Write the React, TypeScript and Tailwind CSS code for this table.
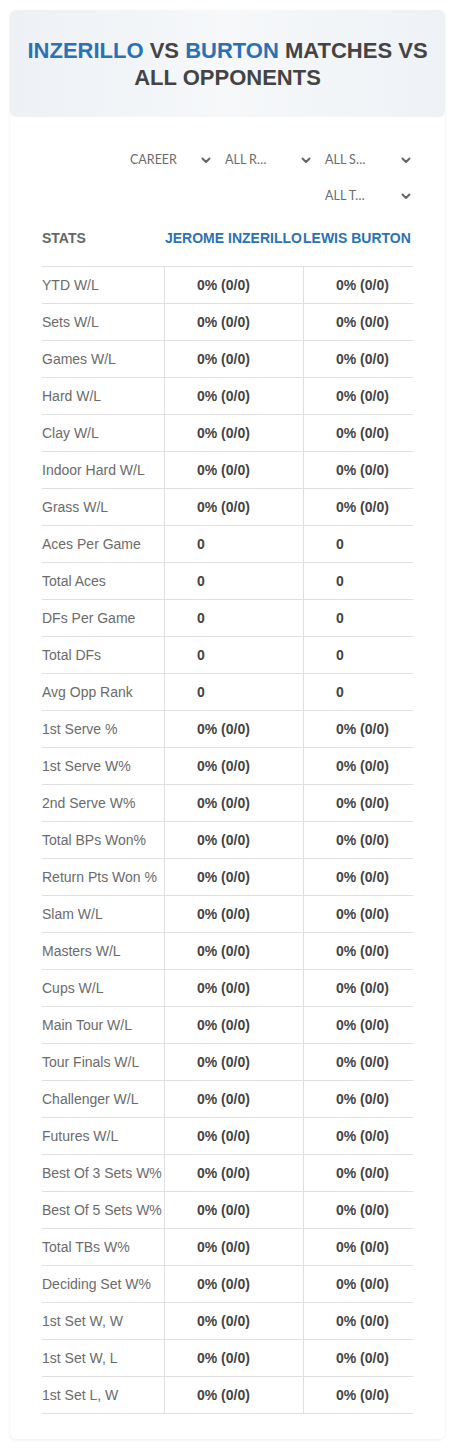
import React from "react";

const rows: [string, string][] = [
  ["YTD W/L", "0% (0/0)"],
  ["Sets W/L", "0% (0/0)"],
  ["Games W/L", "0% (0/0)"],
  ["Hard W/L", "0% (0/0)"],
  ["Clay W/L", "0% (0/0)"],
  ["Indoor Hard W/L", "0% (0/0)"],
  ["Grass W/L", "0% (0/0)"],
  ["Aces Per Game", "0"],
  ["Total Aces", "0"],
  ["DFs Per Game", "0"],
  ["Total DFs", "0"],
  ["Avg Opp Rank", "0"],
  ["1st Serve %", "0% (0/0)"],
  ["1st Serve W%", "0% (0/0)"],
  ["2nd Serve W%", "0% (0/0)"],
  ["Total BPs Won%", "0% (0/0)"],
  ["Return Pts Won %", "0% (0/0)"],
  ["Slam W/L", "0% (0/0)"],
  ["Masters W/L", "0% (0/0)"],
  ["Cups W/L", "0% (0/0)"],
  ["Main Tour W/L", "0% (0/0)"],
  ["Tour Finals W/L", "0% (0/0)"],
  ["Challenger W/L", "0% (0/0)"],
  ["Futures W/L", "0% (0/0)"],
  ["Best Of 3 Sets W%", "0% (0/0)"],
  ["Best Of 5 Sets W%", "0% (0/0)"],
  ["Total TBs W%", "0% (0/0)"],
  ["Deciding Set W%", "0% (0/0)"],
  ["1st Set W, W", "0% (0/0)"],
  ["1st Set W, L", "0% (0/0)"],
  ["1st Set L, W", "0% (0/0)"],
];

function Chevron() {
  return (
    <svg width="10" height="7" viewBox="0 0 10 7" className="shrink-0">
      <polyline points="1.5,1.5 5,5 8.5,1.5" fill="none" stroke="#666" strokeWidth="2" strokeLinecap="round" strokeLinejoin="round" />
    </svg>
  );
}

function Select({ label, pl }: { label: string; pl: string }) {
  return (
    <div className={`flex h-[36px] w-[100px] items-center justify-between pr-[2px] ${pl}`}>
      <span className="text-[12.5px] text-[#6b6b6b]" style={{ fontFamily: "Lato, 'Open Sans', sans-serif" }}>
        {label}
      </span>
      <Chevron />
    </div>
  );
}

export default function App() {
  return (
    <div className="min-h-[1448px] bg-white pt-[10px] px-[10px]" style={{ fontFamily: "'Liberation Sans', Arial, sans-serif" }}>
      <div className="w-[435px] rounded-[6px] bg-white shadow-[0_1px_3px_rgba(0,0,0,0.08)] pb-[25px]">
        <div className="flex h-[107px] items-center justify-center rounded-[6px] bg-gradient-to-r from-[#edf1f5] via-[#f6f8fa] to-[#eef2f6] px-[14px] text-center">
          <h1 className="text-[22px] font-bold leading-[27px] text-[#444444]">
            <span className="text-[#2a72b5]">INZERILLO</span> VS <span className="text-[#2a72b5]">BURTON</span> MATCHES VS ALL OPPONENTS
          </h1>
        </div>
        <div className="px-[32px] pt-[25px]">
          <div className="flex flex-col items-end">
            <div className="flex">
              <Select label="CAREER" pl="pl-[17px]" />
              <Select label="ALL R…" pl="pl-[12px]" />
              <Select label="ALL S…" pl="pl-[12px]" />
            </div>
            <div className="flex">
              <Select label="ALL T…" pl="pl-[12px]" />
            </div>
          </div>
          <div className="flex h-[52px] items-center pb-[4px] text-[14px] font-bold">
            <div className="w-[122px] text-[#666666]">STATS</div>
            <div className="w-[139px] whitespace-nowrap pl-[1px] text-[#2a72b5]">JEROME INZERILLO</div>
            <div className="w-[110px] whitespace-nowrap text-[#2a72b5]">LEWIS BURTON</div>
          </div>
          <div className="border-t border-[#e0e0e0]">
            {rows.map(([label, val]) => (
              <div key={label} className="flex h-[37px] border-b border-[#e0e0e0] text-[14px]">
                <div className="flex w-[122px] items-center whitespace-nowrap text-[#6b6b6b]">{label}</div>
                <div className="flex w-[139px] items-center border-l border-[#e0e0e0] pl-[32px] font-bold text-[#444444]">{val}</div>
                <div className="flex w-[110px] items-center border-l border-[#e0e0e0] pl-[32px] font-bold text-[#444444]">{val}</div>
              </div>
            ))}
          </div>
        </div>
      </div>
    </div>
  );
}
